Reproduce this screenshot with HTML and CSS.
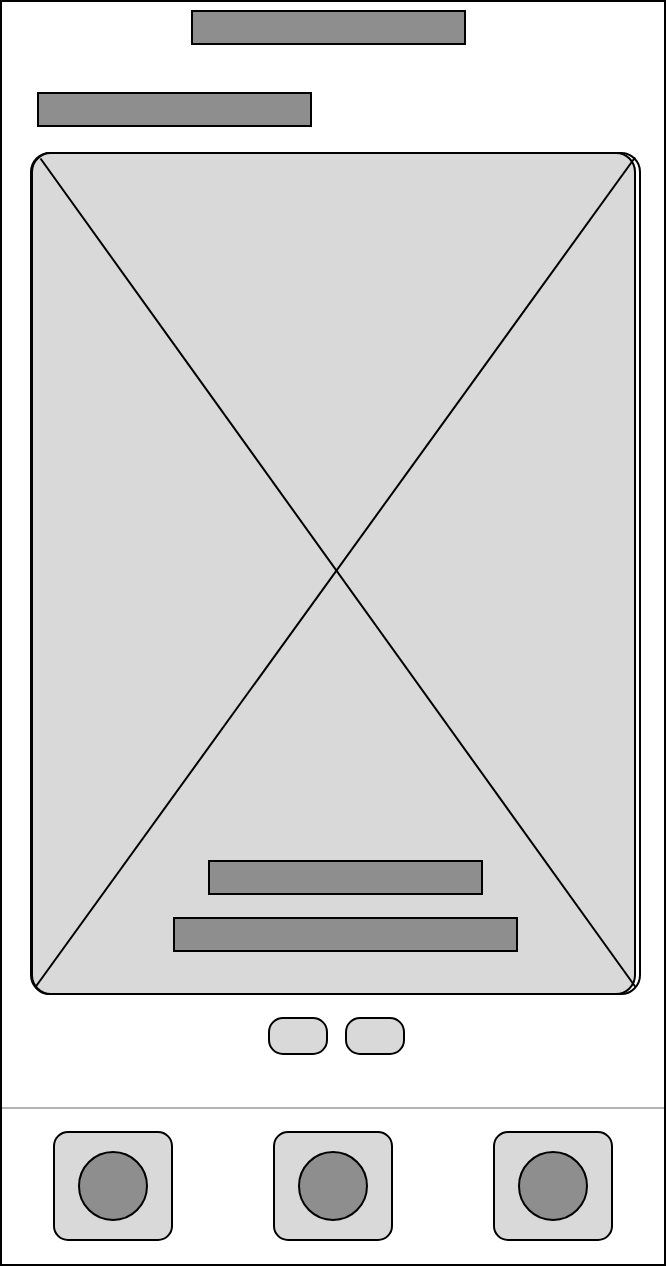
FILE: index.html
```html
<!DOCTYPE html>
<html lang="en">
<head>
<meta charset="utf-8">
<meta name="viewport" content="width=device-width, initial-scale=1">
<title>Wireframe</title>
<link rel="stylesheet" href="styles.css">
</head>
<body>
<div class="screen">
  <header class="header">
    <div class="bar"></div>
  </header>
  <main class="main">
    <div class="bar section-title"></div>
    <section class="card">
      <div class="media">
        <svg class="cross" viewBox="0 0 601 839" preserveAspectRatio="none" aria-hidden="true">
          <line x1="7.5" y1="4.5" x2="602.5" y2="833"/>
          <line x1="602" y1="3.5" x2="2.5" y2="833"/>
        </svg>
        <div class="bar caption"></div>
        <div class="bar bar-wide caption"></div>
      </div>
    </section>
    <div class="pager">
      <button class="pill" type="button"></button>
      <button class="pill" type="button"></button>
    </div>
  </main>
  <nav class="tabs">
    <button class="tab" type="button"><span class="dot"></span></button>
    <button class="tab" type="button"><span class="dot"></span></button>
    <button class="tab" type="button"><span class="dot"></span></button>
  </nav>
</div>
</body>
</html>
```

FILE: styles.css
```css
*,
*::before,
*::after {
  box-sizing: border-box;
}

body {
  margin: 0;
  background: #fff;
  font-family: "Liberation Sans", Arial, sans-serif;
}

.screen {
  display: flex;
  flex-direction: column;
  min-height: 100vh;
  border: 2px solid #000;
}

.bar {
  width: 275px;
  max-width: 100%;
  height: 35px;
  background: #8e8e8e;
  border: 2px solid #000;
}

.bar-wide {
  width: 345px;
}

.header {
  display: flex;
  justify-content: center;
  padding: 8px 9px 0 0;
}

.main {
  flex: 1;
  display: flex;
  flex-direction: column;
  padding: 47px 23px 52px 28px;
}

.section-title {
  margin: 0 0 25px 7px;
}

.card {
  flex: 1;
  display: flex;
  border: 2px solid #000;
  border-radius: 20px;
}

/* The picture overlaps the card outline and leaves a sliver on the right. */
.media {
  position: relative;
  flex: 1;
  display: flex;
  flex-direction: column;
  justify-content: flex-end;
  align-items: center;
  gap: 22px;
  margin: -2px 3px -2px -1px;
  padding: 41px 0 41px 24px;
  background: #d9d9d9;
  border: 2px solid #000;
  border-radius: 20px;
}

.cross {
  position: absolute;
  inset: 0;
  width: 100%;
  height: 100%;
  overflow: visible;
  stroke: #000;
  stroke-width: 2;
}

.cross line {
  vector-effect: non-scaling-stroke;
}

.caption {
  position: relative;
}

.pager {
  display: flex;
  justify-content: center;
  gap: 17px;
  margin-top: 22px;
  padding-left: 2px;
}

.pill {
  width: 60px;
  height: 38px;
  padding: 0;
  background: #d9d9d9;
  border: 2px solid #000;
  border-radius: 15px;
}

.tabs {
  display: flex;
  justify-content: space-between;
  padding: 22px 51px 23px;
  border-top: 2px solid #b3b3b3;
}

.tab {
  display: flex;
  justify-content: center;
  align-items: center;
  width: 120px;
  height: 110px;
  padding: 0;
  background: #d9d9d9;
  border: 2px solid #000;
  border-radius: 15px;
}

.dot {
  width: 70px;
  height: 70px;
  background: #8e8e8e;
  border: 2px solid #000;
  border-radius: 50%;
}
```
